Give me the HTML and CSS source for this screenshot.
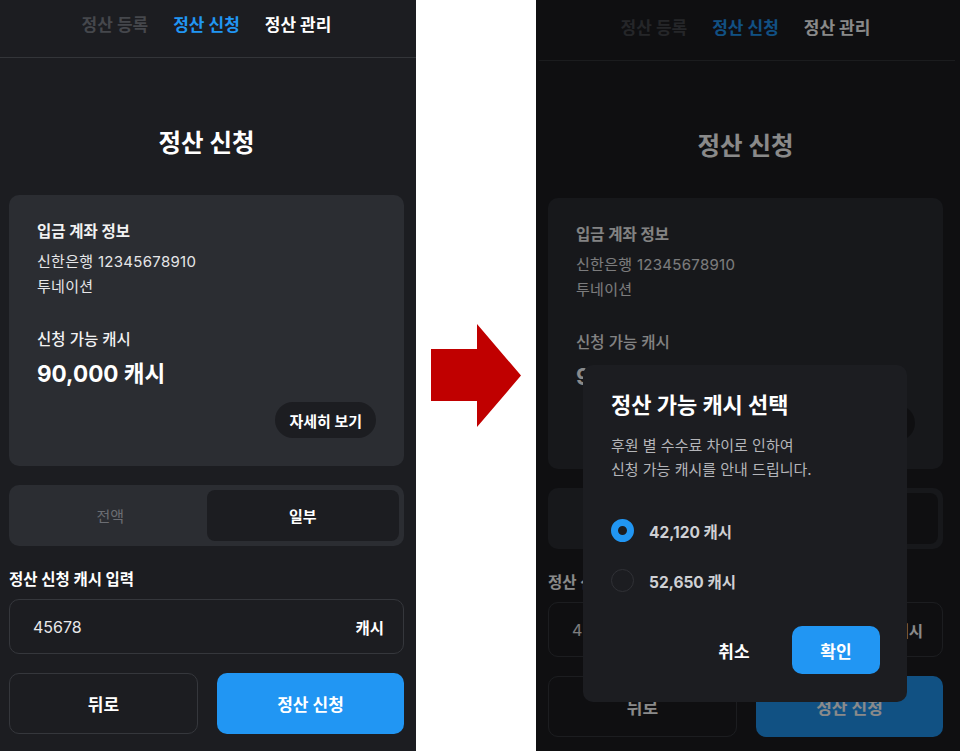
FILE: index.html
```html
<!DOCTYPE html>
<html lang="ko">
<head>
    <meta charset="utf-8">
    <title>정산 신청</title>
    <link rel="stylesheet" href="styles.css">
</head>
<body>
<div class="board">

    <!-- before -->
    <div class="phone">
        <div class="nav">
            <span class="nav-item">정산 등록</span>
            <span class="nav-item active">정산 신청</span>
            <span class="nav-item current">정산 관리</span>
        </div>
        <div class="content">
            <h1 class="title">정산 신청</h1>
            <div class="card">
                <div class="card-label">입금 계좌 정보</div>
                <div class="account">
                    <div>신한은행 12345678910</div>
                    <div>투네이션</div>
                </div>
                <div class="card-label cash-label">신청 가능 캐시</div>
                <div class="cash">90,000 캐시</div>
                <div class="card-foot"><span class="pill">자세히 보기</span></div>
            </div>
            <div class="segment">
                <span class="seg-item">전액</span>
                <span class="seg-item selected">일부</span>
            </div>
            <div class="field-label">정산 신청 캐시 입력</div>
            <div class="field">
                <span class="field-value">45678</span>
                <span class="field-unit">캐시</span>
            </div>
            <div class="actions">
                <span class="btn btn-line">뒤로</span>
                <span class="btn btn-blue">정산 신청</span>
            </div>
        </div>
    </div>

    <div class="gap">
        <svg class="arrow" width="90" height="103" viewBox="0 0 90 103">
            <polygon points="0,25 46,25 46,0 90,51.5 46,103 46,77 0,77" fill="#c00000"/>
        </svg>
    </div>

    <!-- after -->
    <div class="phone phone-wide">
        <div class="shift">
            <div class="nav">
                <span class="nav-item">정산 등록</span>
                <span class="nav-item active">정산 신청</span>
                <span class="nav-item current">정산 관리</span>
            </div>
            <div class="content">
                <h1 class="title">정산 신청</h1>
                <div class="card">
                    <div class="card-label">입금 계좌 정보</div>
                    <div class="account">
                        <div>신한은행 12345678910</div>
                        <div>투네이션</div>
                    </div>
                    <div class="card-label cash-label">신청 가능 캐시</div>
                    <div class="cash">90,000 캐시</div>
                    <div class="card-foot"><span class="pill">자세히 보기</span></div>
                </div>
                <div class="segment">
                    <span class="seg-item">전액</span>
                    <span class="seg-item selected">일부</span>
                </div>
                <div class="field-label">정산 신청 캐시 입력</div>
                <div class="field">
                    <span class="field-value">45678</span>
                    <span class="field-unit">캐시</span>
                </div>
                <div class="actions">
                    <span class="btn btn-line">뒤로</span>
                    <span class="btn btn-blue">정산 신청</span>
                </div>
            </div>
        </div>

        <div class="dim"></div>

        <div class="modal">
            <div class="modal-title">정산 가능 캐시 선택</div>
            <p class="modal-desc">후원 별 수수료 차이로 인하여<br>신청 가능 캐시를 안내 드립니다.</p>
            <div class="options">
                <div class="option"><span class="radio checked"></span>42,120 캐시</div>
                <div class="option"><span class="radio"></span>52,650 캐시</div>
            </div>
            <div class="modal-actions">
                <span class="modal-btn">취소</span>
                <span class="modal-btn primary">확인</span>
            </div>
        </div>
    </div>

</div>
</body>
</html>
```

FILE: styles.css
```css
* {
    box-sizing: border-box;
}
body {
    margin: 0;
    background: #ffffff;
    font-family: Inter, "Noto Sans CJK KR", sans-serif;
    color: #ffffff;
}
.board {
    display: flex;
    width: 960px;
    height: 751px;
}

/* phone frame */
.phone {
    position: relative;
    width: 416px;
    height: 751px;
    background: #1c1d21;
    overflow: hidden;
    flex: none;
}
.phone-wide {
    width: 424px;
}
.shift {
    padding: 3px 0 0 3px;
}

/* top tabs */
.nav {
    width: 416px;
    height: 58px;
    display: flex;
    justify-content: center;
    gap: 25px;
    padding: 13px 3px 0 0;
    border-bottom: 1px solid #333539;
}
.nav-item {
    font-size: 17px;
    line-height: 24px;
    font-weight: 700;
    color: #45474c;
}
.nav-item.active {
    color: #2196f3;
}
.nav-item.current {
    color: #ffffff;
}

.content {
    width: 416px;
    padding: 0 12px 0 9px;
}
.title {
    margin: 69px 0 0;
    font-size: 24.5px;
    line-height: 32px;
    font-weight: 700;
    text-align: center;
}

/* account card */
.card {
    margin-top: 36px;
    height: 271px;
    padding: 26px 28px 28px;
    background: #2b2d32;
    border-radius: 10px;
}
.card-label {
    font-size: 15.5px;
    line-height: 22px;
    font-weight: 700;
    color: #f2f2f2;
}
.account {
    margin-top: 6px;
    font-size: 15px;
    line-height: 25px;
    letter-spacing: 0.02em;
    color: #e6e6e8;
}
.cash-label {
    margin-top: 30px;
    font-weight: 500;
}
.cash {
    margin-top: 7px;
    font-size: 22.5px;
    line-height: 32px;
    font-weight: 700;
}
.card-foot {
    margin-top: 12px;
    display: flex;
    justify-content: flex-end;
}
.pill {
    height: 36px;
    padding: 0 14px;
    display: flex;
    align-items: center;
    border-radius: 18px;
    background: #1c1d21;
    font-size: 15px;
    font-weight: 700;
}

/* 전액 / 일부 */
.segment {
    margin-top: 19px;
    height: 61px;
    padding: 5px;
    display: flex;
    background: #2b2d32;
    border-radius: 10px;
}
.seg-item {
    flex: 1;
    display: flex;
    align-items: center;
    justify-content: center;
    font-size: 15px;
    color: #6b6d73;
    border-radius: 8px;
}
.seg-item.selected {
    background: #1c1d21;
    color: #ffffff;
    font-weight: 700;
}

.field-label {
    margin-top: 23px;
    font-size: 15.5px;
    line-height: 22px;
    font-weight: 700;
}
.field {
    margin-top: 8px;
    height: 55px;
    padding: 0 19px 0 23px;
    display: flex;
    align-items: center;
    justify-content: space-between;
    border: 1px solid #35373c;
    border-radius: 10px;
}
.field-value {
    font-size: 16px;
    color: #e8e8ea;
}
.field-unit {
    font-size: 15.5px;
    font-weight: 700;
}

.actions {
    margin-top: 19px;
    display: flex;
    gap: 19px;
}
.btn {
    flex: 1;
    height: 61px;
    display: flex;
    align-items: center;
    justify-content: center;
    border-radius: 10px;
    font-size: 17px;
    font-weight: 700;
}
.btn-line {
    border: 1px solid #35373c;
}
.btn-blue {
    background: #2196f3;
}

/* dialog */
.dim {
    position: absolute;
    inset: 0;
    background: rgba(0, 0, 0, 0.46);
}
.modal {
    position: absolute;
    left: 47px;
    top: 365px;
    width: 324px;
    height: 337px;
    padding: 25px 27px 28px 28px;
    background: #1c1d21;
    border-radius: 10px;
}
.modal-title {
    font-size: 22px;
    line-height: 30px;
    font-weight: 700;
}
.modal-desc {
    margin: 14px 0 0;
    font-size: 15px;
    line-height: 24px;
    color: #b4b5b9;
}
.options {
    margin-top: 37px;
    display: flex;
    flex-direction: column;
    gap: 27px;
}
.option {
    height: 23px;
    display: flex;
    align-items: center;
    gap: 15px;
    font-size: 15.5px;
    font-weight: 700;
    color: #cfd0d4;
}
.radio {
    width: 23px;
    height: 23px;
    border-radius: 50%;
    border: 1.5px solid #303136;
    flex: none;
}
.radio.checked {
    border: 7px solid #2196f3;
    background: #1c1d21;
}
.modal-actions {
    margin-top: 34px;
    display: flex;
    justify-content: flex-end;
    gap: 14px;
}
.modal-btn {
    width: 88px;
    height: 48px;
    display: flex;
    align-items: center;
    justify-content: center;
    border-radius: 10px;
    font-size: 17px;
    font-weight: 700;
}
.modal-btn.primary {
    background: #2196f3;
}

/* arrow between the two shots */
.gap {
    width: 120px;
    flex: none;
    display: flex;
    align-items: center;
    padding-left: 15px;
}
.arrow {
    display: block;
}
```
